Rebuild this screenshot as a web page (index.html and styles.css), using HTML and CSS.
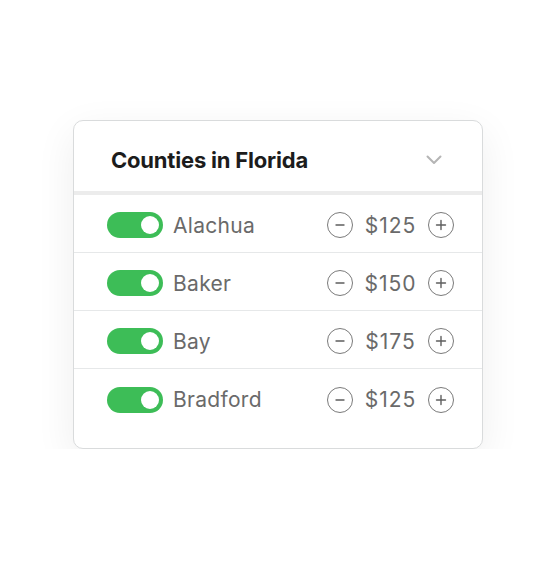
FILE: index.html
```html
<!DOCTYPE html>
<html lang="en">
<head>
    <meta charset="UTF-8">
    <meta name="viewport" content="width=device-width, initial-scale=1.0">
    <title>Counties in Florida</title>
    <link rel="stylesheet" href="styles.css">
</head>
<body>
    <div class="county-card">
        <header class="card-header">
            <h2>Counties in Florida</h2>
            <svg class="chevron" width="16" height="10" viewBox="0 0 16 10">
                <path d="M1.5 1.5 L8 8 L14.5 1.5" fill="none" stroke="#b5b5b5" stroke-width="2" stroke-linecap="round" stroke-linejoin="round"/>
            </svg>
        </header>
        <ul class="county-list">
            <li class="county-row">
                <span class="toggle on"><span class="knob"></span></span>
                <span class="county-name">Alachua</span>
                <span class="stepper">
                    <button class="step"><svg width="12" height="12" viewBox="0 0 12 12"><path d="M2 6 H10"/></svg></button>
                    <span class="price">$125</span>
                    <button class="step"><svg width="12" height="12" viewBox="0 0 12 12"><path d="M1.5 6 H10.5 M6 1.5 V10.5"/></svg></button>
                </span>
            </li>
            <li class="county-row">
                <span class="toggle on"><span class="knob"></span></span>
                <span class="county-name">Baker</span>
                <span class="stepper">
                    <button class="step"><svg width="12" height="12" viewBox="0 0 12 12"><path d="M2 6 H10"/></svg></button>
                    <span class="price">$150</span>
                    <button class="step"><svg width="12" height="12" viewBox="0 0 12 12"><path d="M1.5 6 H10.5 M6 1.5 V10.5"/></svg></button>
                </span>
            </li>
            <li class="county-row">
                <span class="toggle on"><span class="knob"></span></span>
                <span class="county-name">Bay</span>
                <span class="stepper">
                    <button class="step"><svg width="12" height="12" viewBox="0 0 12 12"><path d="M2 6 H10"/></svg></button>
                    <span class="price">$175</span>
                    <button class="step"><svg width="12" height="12" viewBox="0 0 12 12"><path d="M1.5 6 H10.5 M6 1.5 V10.5"/></svg></button>
                </span>
            </li>
            <li class="county-row">
                <span class="toggle on"><span class="knob"></span></span>
                <span class="county-name">Bradford</span>
                <span class="stepper">
                    <button class="step"><svg width="12" height="12" viewBox="0 0 12 12"><path d="M2 6 H10"/></svg></button>
                    <span class="price">$125</span>
                    <button class="step"><svg width="12" height="12" viewBox="0 0 12 12"><path d="M1.5 6 H10.5 M6 1.5 V10.5"/></svg></button>
                </span>
            </li>
        </ul>
    </div>
</body>
</html>
```

FILE: styles.css
```css
body {
    margin: 0;
    padding: 120px 0 0 73px;
    font-family: Inter, "Noto Sans", sans-serif;
    background: #ffffff;
}

.county-card {
    width: 408px;
    background: #ffffff;
    border: 1px solid #d9dbdc;
    border-radius: 10px;
    box-shadow: 0 12px 40px rgba(0, 0, 0, 0.07);
    padding-bottom: 21px;
}

.card-header {
    height: 62px;
    display: flex;
    align-items: center;
    justify-content: space-between;
    padding: 8px 40px 0 37px;
    border-bottom: 4px solid #ececec;
}

.card-header h2 {
    margin: 0;
    font-size: 22px;
    font-weight: 700;
    color: #1c1c1c;
    letter-spacing: -0.2px;
}

.chevron {
    display: block;
}

.county-list {
    list-style: none;
    margin: 0;
    padding: 0;
}

.county-row {
    height: 58px;
    box-sizing: border-box;
    display: flex;
    align-items: center;
    padding: 3px 28px 0 33px;
    border-bottom: 1px solid #e6e8e9;
}

.county-row:last-child {
    border-bottom: none;
}

.toggle {
    width: 56px;
    height: 26px;
    border-radius: 13px;
    background: #3dbd57;
    display: flex;
    align-items: center;
    justify-content: flex-end;
    padding: 0 4px;
    box-sizing: border-box;
}

.knob {
    width: 18px;
    height: 18px;
    border-radius: 50%;
    background: #ffffff;
}

.county-name {
    margin-left: 10px;
    font-size: 21px;
    letter-spacing: 0.3px;
    color: #6a6a6a;
    flex: 1;
}

.stepper {
    display: flex;
    align-items: center;
    gap: 11px;
}

.step {
    width: 26px;
    height: 26px;
    border-radius: 50%;
    border: 1px solid #7a7a7a;
    background: #ffffff;
    padding: 0;
    display: flex;
    align-items: center;
    justify-content: center;
}

.step svg {
    display: block;
    fill: none;
    stroke: #5e5e5e;
    stroke-width: 1.4;
    stroke-linecap: round;
}

.price {
    font-size: 21px;
    letter-spacing: 1px;
    color: #6a6a6a;
    min-width: 53px;
    text-align: center;
}
```
